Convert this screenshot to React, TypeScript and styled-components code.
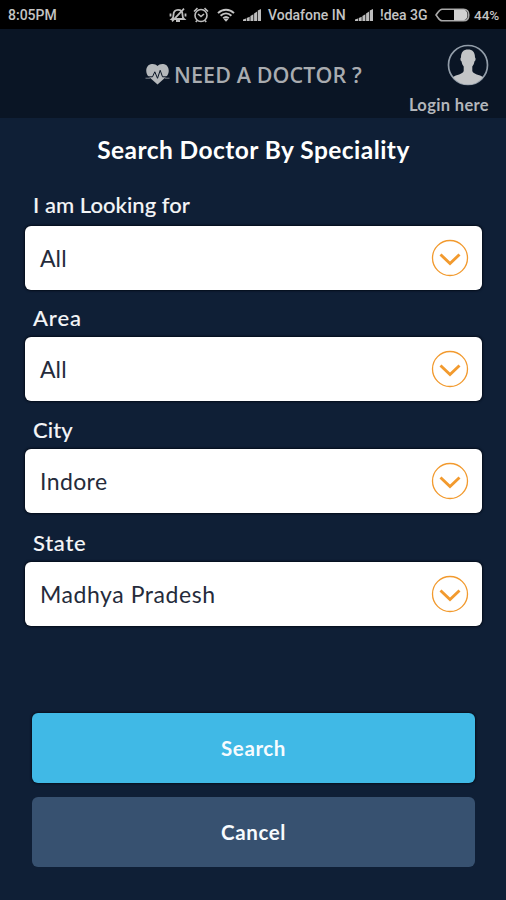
import React from "react";
import styled, { createGlobalStyle } from "styled-components";

const fields = [
  { label: "I am Looking for", value: "All", labelHeight: 41, spacing: 0.05, valueSpacing: 0.1 },
  { label: "Area", value: "All", labelHeight: 47, spacing: 0.9, valueSpacing: 0.1 },
  { label: "City", value: "Indore", labelHeight: 48, spacing: 0.1, valueSpacing: 0.4 },
  { label: "State", value: "Madhya Pradesh", labelHeight: 49, spacing: 0.7, valueSpacing: 0.55 },
];

export default function App() {
  return (
    <Screen>
      <GlobalStyle />
      <StatusBar />
      <Header>
        <Brand>
          <HeartIcon />
          <BrandName>NEED A DOCTOR ?</BrandName>
        </Brand>
        <Login>
          <AvatarIcon />
          <LoginLabel>Login here</LoginLabel>
        </Login>
      </Header>
      <Title>Search Doctor By Speciality</Title>
      <Form>
        {fields.map(({ label, value, labelHeight, spacing, valueSpacing }, i) => (
          <React.Fragment key={label}>
            <Label $height={labelHeight} $gap={i === 0 ? 8 : 6} $spacing={spacing}>
              {label}
            </Label>
            <Select>
              <Value $spacing={valueSpacing}>{value}</Value>
              <ChevronIcon />
            </Select>
          </React.Fragment>
        ))}
      </Form>
      <Actions>
        <Button $primary>Search</Button>
        <Button>Cancel</Button>
      </Actions>
    </Screen>
  );
}

const StatusBar = () => (
  <Status>
    <Clock>8:05PM</Clock>
    <MuteIcon />
    <AlarmIcon />
    <WifiIcon />
    <SignalIcon />
    <Carrier $width={80}>Vodafone IN</Carrier>
    <SignalIcon />
    <Carrier $width={48}>!dea 3G</Carrier>
    <BatteryIcon />
    <Percent>44%</Percent>
  </Status>
);

const MuteIcon = () => (
  <MuteSvg viewBox="0 0 18 16" fill="none" stroke="#bdbdbd" strokeWidth="1.8">
    <path d="M3 12c1.200-1 1.500-2.500 1.500-4.200C4.500 4.500 6.200 2.800 9 2.800s4.500 1.700 4.500 5c0 1.700.3 3.200 1.500 4.200z" />
    <path d="M7 14h4M3 14.300 15 1.700M1.500 6.500v3M16.500 6.500v3" />
  </MuteSvg>
);

const AlarmIcon = () => (
  <AlarmSvg viewBox="0 0 16 16" fill="none" stroke="#bdbdbd" strokeWidth="1.600">
    <circle cx="8" cy="8.500" r="6" />
    <path d="M5 7 8 9.500 11 7M1 4.500 4.500 1.200M15 4.500 11.500 1.200M4 13.500 2.800 15M12 13.500l1.200 1.500" />
  </AlarmSvg>
);

const WifiIcon = () => (
  <WifiSvg viewBox="0 0 18 14" fill="none" stroke="#c4c4c4" strokeWidth="1.900">
    <path d="M1 5.200c4.600-4.600 11.400-4.600 16 0M3.600 7.800c3.200-3.100 7.600-3.100 10.800 0M6.200 10.300c1.700-1.600 3.900-1.600 5.600 0" />
    <path d="m9 13.800-2.300-2.500c1.400-1.200 3.200-1.200 4.600 0z" fill="#c4c4c4" stroke="none" />
  </WifiSvg>
);

const SignalIcon = () => (
  <SignalSvg viewBox="0 0 18 12" fill="#bdbdbd">
    <path d="M0 10.500 3 9.500V12H0zM3.700 9l3-1.200V12h-3zM7.400 7l3-1.700V12h-3zM11.100 4.500l3-2V12h-3zM14.800 1.500 18 0v12h-3.200z" />
  </SignalSvg>
);

const BatteryIcon = () => (
  <BatterySvg viewBox="0 0 35 14">
    <path
      d="M7 1.200h21.500c3 0 5.300 2 5.300 5.800s-2.300 5.800-5.300 5.800H7C4.500 12.800 3.500 10 1 7 3.500 4 4.500 1.200 7 1.200z"
      fill="none"
      stroke="#a8a8a8"
      strokeWidth="1.600"
    />
    <path d="M19 1.800h9.500c2.500 0 4 2 4 5.200s-1.500 5.200-4 5.200H19z" fill="#d2d2d2" />
  </BatterySvg>
);

const HeartIcon = () => (
  <HeartSvg viewBox="0 0 25 22">
    <path
      d="M12.500 21.500 3.500 13.500C-.5 9 1 1.500 6.800 1c2.500-.2 4.500 .5 5.700 2 1.200-1.500 3.200-2.200 5.700-2 5.800.5 7.300 8 3.300 12.500z"
      fill="#b5b8bb"
    />
    <path
      d="M1.500 13.800h6l2.300-5 2.700 6.500 2.700-8 2.300 6.500h6"
      fill="none"
      stroke="#0a1525"
      strokeWidth="1"
    />
    <path d="M.5 15.200h4.500M20 15.200h4.500" fill="none" stroke="#7f858d" strokeWidth="1" />
  </HeartSvg>
);

const AvatarIcon = () => (
  <AvatarSvg viewBox="0 0 42 42">
    <circle cx="21" cy="21" r="19.500" fill="none" stroke="#929da9" strokeWidth="1.700" />
    <path
      d="M14 13.500c0-5.500 2.500-8 7-8s7 2.500 7 8c.9.300.8 3.300-.6 4-.3 2.500-1.200 3.700-2.100 5v4.500c1 3.500 7.500 3.500 10.700 6.200A18.900 18.900 0 0 1 6 33.200c3.200-2.700 9.700-2.700 10.700-6.200v-4.500c-.9-1.300-1.800-2.500-2.100-5-1.400-.7-1.500-3.700-.6-4z"
      fill="#c3c5c7"
    />
  </AvatarSvg>
);

const ChevronIcon = () => (
  <ChevronSvg viewBox="0 0 38 38" fill="none" stroke="#f29a2e">
    <circle cx="19" cy="19" r="17.500" strokeWidth="1.300" />
    <path d="m9.500 15.500 9.500 9 9.500-9" strokeWidth="2.900" />
  </ChevronSvg>
);

const GlobalStyle = createGlobalStyle`
  body {
    margin: 0;
    background: #0f1f36;
  }
`;

const Screen = styled.div`
  display: flex;
  flex-direction: column;
  width: 506px;
  height: 900px;
  overflow: hidden;
  background: #0f1f36;
  color: #f4f5f7;
  font-family: Lato, "Liberation Sans", sans-serif;
`;

const Status = styled.div`
  display: flex;
  align-items: center;
  flex: none;
  box-sizing: border-box;
  height: 29px;
  padding: 0 8px;
  background: #000;
  color: #c4c4c4;
  font: 500 14px/30px Roboto, sans-serif;
  white-space: nowrap;
`;

const Clock = styled.span`
  flex: none;
  width: 161px;
`;

const Carrier = styled.span<{ $width: number }>`
  flex: none;
  width: ${({ $width }) => $width}px;
  margin-right: 7px;
`;

const Percent = styled.span`
  font-size: 13.5px;
`;

const Icon = styled.svg`
  display: block;
  flex: none;
`;

const MuteSvg = styled(Icon)`
  width: 18px;
  height: 16px;
  margin-right: 6px;
`;

const AlarmSvg = styled(Icon)`
  width: 16px;
  height: 16px;
  margin-right: 8px;
`;

const WifiSvg = styled(Icon)`
  width: 18px;
  height: 14px;
  margin-right: 8px;
`;

const SignalSvg = styled(Icon)`
  width: 18px;
  height: 12px;
  margin: 1px 7px 0 0;
`;

const BatterySvg = styled(Icon)`
  width: 35px;
  height: 14px;
  margin-right: 4px;
`;

const Header = styled.header`
  display: flex;
  justify-content: space-between;
  flex: none;
  box-sizing: border-box;
  height: 89px;
  padding: 0 17px 0 145px;
  background: #0a1525;
`;

const Brand = styled.div`
  display: flex;
  align-items: flex-start;
  padding-top: 34px;
`;

const BrandName = styled.span`
  margin-left: 4px;
  color: #a9acb0;
  font: 600 21.500px/24px "Open Sans", sans-serif;
  letter-spacing: 0.1px;
  white-space: nowrap;
`;

const HeartSvg = styled(Icon)`
  width: 25px;
  height: 22px;
`;

const Login = styled.div`
  display: flex;
  flex-direction: column;
  align-items: flex-end;
  padding-top: 15px;
`;

const AvatarSvg = styled(Icon)`
  width: 42px;
  height: 42px;
`;

const LoginLabel = styled.span`
  margin-top: 9px;
  color: #b3b6bb;
  font-size: 16.5px;
  font-weight: 700;
  letter-spacing: 0.35px;
  line-height: 20px;
`;

const Title = styled.h1`
  flex: none;
  margin: 0;
  height: 67px;
  color: #fff;
  font-size: 24.5px;
  font-weight: 700;
  letter-spacing: 0.45px;
  line-height: 63px;
  text-align: center;
  text-indent: 1px;
`;

const Form = styled.div`
  display: flex;
  flex-direction: column;
  flex: none;
  padding: 0 24px 0 25px;
`;

const Label = styled.label<{ $height: number; $gap: number; $spacing: number }>`
  display: flex;
  align-items: flex-end;
  box-sizing: border-box;
  height: ${({ $height }) => $height}px;
  padding: 0 0 ${({ $gap }) => $gap}px 8px;
  font-size: 22px;
  font-weight: 500;
  letter-spacing: ${({ $spacing }) => $spacing}px;
  line-height: 26px;
  -webkit-text-stroke: 0.1px;
`;

const Select = styled.div`
  display: flex;
  align-items: center;
  justify-content: space-between;
  box-sizing: border-box;
  height: 64px;
  padding: 0 13px 0 15px;
  border-radius: 6px;
  background: #fff;
  box-shadow: 0 0 2px 1px #050d1b;
  color: #252b3b;
`;

const Value = styled.span<{ $spacing: number }>`
  font-size: 23px;
  letter-spacing: ${({ $spacing }) => $spacing}px;
  line-height: 26px;
`;

const ChevronSvg = styled(Icon)`
  width: 38px;
  height: 38px;
`;

const Actions = styled.div`
  display: flex;
  flex-direction: column;
  gap: 14px;
  padding: 87px 31px 0 32px;
`;

const Button = styled.button<{ $primary?: boolean }>`
  height: 70px;
  padding: 0;
  border: 0;
  border-radius: 6px;
  background: ${({ $primary }) => ($primary ? "#40b9e6" : "#375170")};
  box-shadow: ${({ $primary }) => ($primary ? "0 0 2px 1px #07111f" : "none")};
  color: #f7fbfe;
  font: 700 20.5px/24px Lato, sans-serif;
  letter-spacing: 0.6px;
`;
